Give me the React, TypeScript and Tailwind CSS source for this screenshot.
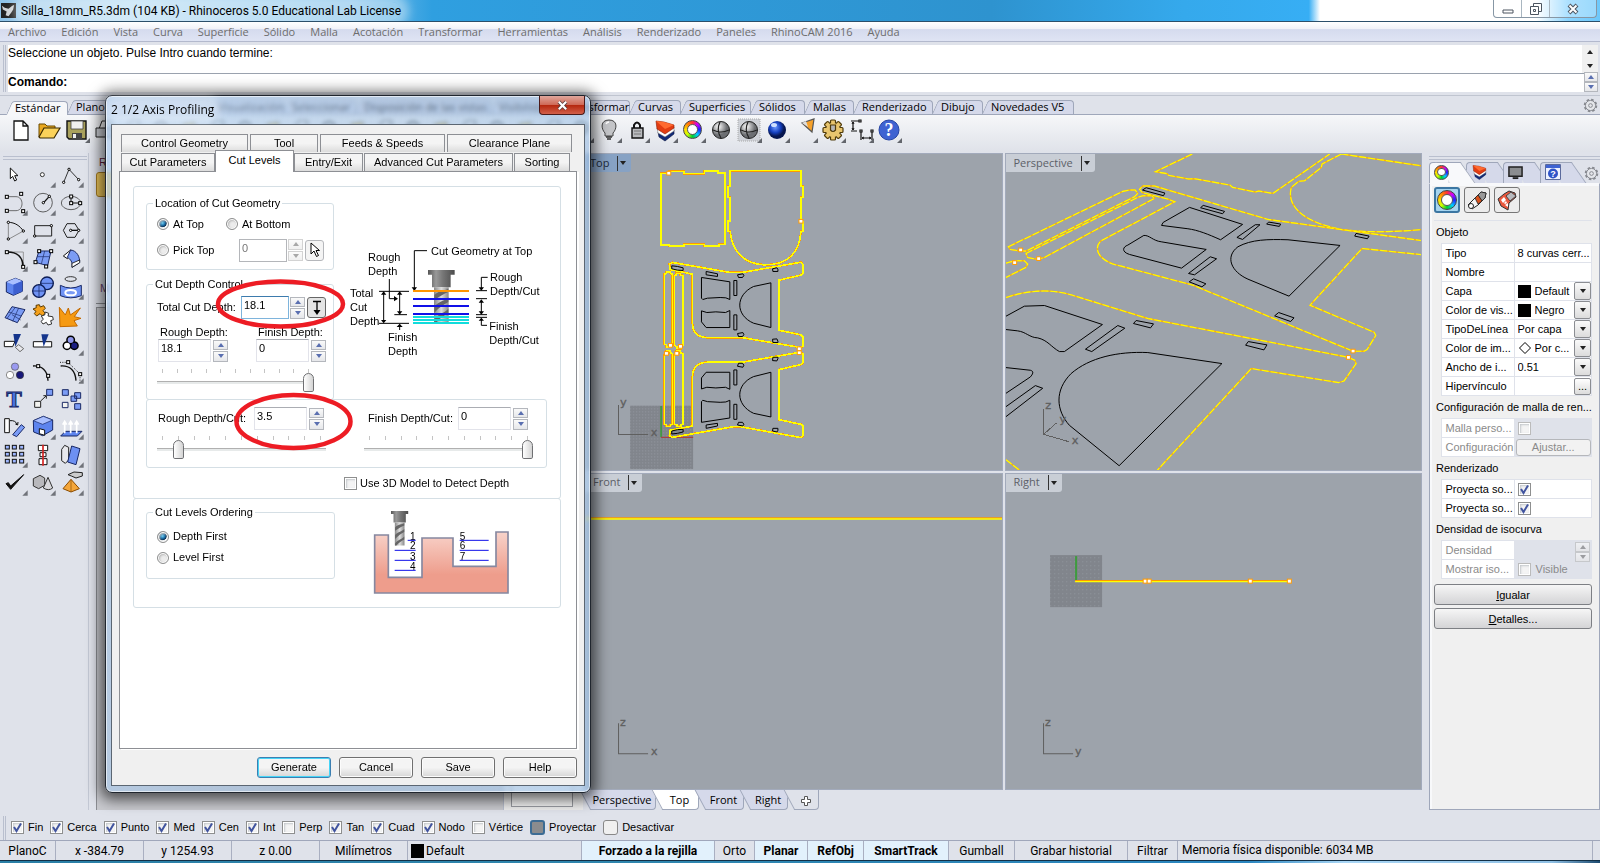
import React from "react";

const SEGOE = "font-['Open_Sans',sans-serif]";

/* ---------- toolbar and palette drawings ---------- */

const Node = ({ x, y }: { x: number; y: number }) => (
  <rect x={x - 4} y={y - 4} width="9" height="9" fill="#fff" stroke="#000" strokeWidth="3" />
);
const Dot = ({ x, y }: { x: number; y: number }) => (
  <circle cx={x} cy={y} r="3.5" fill="#fff" stroke="#000" strokeWidth="3" />
);

type Tool = { name: string; flyout?: boolean; art: React.ReactNode };

const palette: Tool[] = [
  { name: "Seleccionar", art: <path d="M31 204V236L38 229L44 243L50 240L44 227H54Z" fill="#fff" stroke="#111" strokeWidth="3" /> },
  { name: "Punto", flyout: true, art: <circle cx="127" cy="224" r="6" fill="#fff" stroke="#333" strokeWidth="3" /> },
  { name: "Polilínea", flyout: true, art: <><path d="M191 247L207 208L236 239" fill="none" stroke="#111" strokeWidth="2.5" /><Dot x={191} y={247} /><Dot x={207} y={208} /><Dot x={236} y={239} /></> },
  { name: "Curva", flyout: true, art: <><path d="M22 290H48C72 290 72 332 48 332H22" fill="none" stroke="#555" strokeWidth="2.5" /><Node x={20} y={290} /><Node x={63} y={281} /><Node x={20} y={332} /><Node x={69} y={333} /></> },
  { name: "Círculo", flyout: true, art: <><circle cx="129" cy="308" r="28" fill="none" stroke="#444" strokeWidth="2.5" /><path d="M131 308L148 289" stroke="#111" strokeWidth="4" /><Dot x={130} y={308} /><Dot x={148} y={289} /></> },
  { name: "Elipse", flyout: true, art: <><ellipse cx="213" cy="309" rx="29" ry="20" fill="none" stroke="#444" strokeWidth="2.5" /><path d="M213 289V309H240" fill="none" stroke="#111" strokeWidth="3" /><Node x={213} y={289} /><Node x={213} y={309} /><Node x={240} y={309} /></> },
  { name: "Arco", flyout: true, art: <><path d="M25 367V418M25 418L70 393" stroke="#777" strokeWidth="2.5" /><path d="M25 367C45 367 60 378 70 393" fill="none" stroke="#111" strokeWidth="3" /><Dot x={25} y={367} /><Dot x={25} y={417} /><Dot x={70} y={393} /></> },
  { name: "Rectángulo", flyout: true, art: <><path d="M104 377H155V408H104Z" fill="none" stroke="#222" strokeWidth="3" /><Dot x={154} y={377} /><Dot x={104} y={408} /></> },
  { name: "Polígono", flyout: true, art: <><path d="M190 391L201 371H225L237 391L225 412H201Z" fill="none" stroke="#222" strokeWidth="3" /><path d="M212 391H236" stroke="#111" strokeWidth="4" /><Dot x={212} y={391} /><Dot x={236} y={391} /></> },
  { name: "Empalmar curvas", flyout: true, art: <><path d="M22 456H70V500" fill="none" stroke="#888" strokeWidth="2.5" /><path d="M22 456C52 456 69 472 69 500" fill="none" stroke="#111" strokeWidth="5" /><Node x={20} y={456} /><Node x={69} y={500} /></> },
  { name: "Superficie", flyout: true, art: <><path d="M117 453H153L143 497L106 487Z" fill="#7b9cf5" stroke="#1b2a66" strokeWidth="3" /><path d="M134 453L124 492M112 470H148" stroke="#1b2a66" strokeWidth="2" /><Node x={117} y={453} /><Node x={153} y={453} /><Node x={106} y={486} /><Node x={138} y={499} /></> },
  { name: "Superficie por barrido", flyout: true, art: <><path d="M190 468L212 450L224 458L202 476Z" fill="#fff" stroke="#111" strokeWidth="3" /><path d="M212 450C230 452 240 470 239 488L216 502C218 485 212 478 202 472Z" fill="#7b9cf5" stroke="#1b2a66" strokeWidth="3" /><path d="M216 502L239 488V480L216 490Z" fill="#fff" stroke="#111" strokeWidth="2.5" /></> },
  { name: "Caja", flyout: true, art: <><path d="M19 546L46 535L67 543V574L40 586L19 576Z" fill="#5d84ee" stroke="#172765" strokeWidth="3" /><path d="M19 546L46 535L67 543L40 554Z" fill="#a9bfff" /><path d="M40 554L67 543V574L40 586Z" fill="#3c5fd0" /></> },
  { name: "Esfera", flyout: true, art: <><circle cx="141" cy="550" r="19" fill="#6f93f5" stroke="#0d1d55" strokeWidth="4" /><circle cx="117" cy="573" r="19" fill="#6f93f5" stroke="#0d1d55" strokeWidth="4" /><path d="M98 573H136M117 554V592M122 550H160" stroke="#0d1d55" strokeWidth="2" /></> },
  { name: "Cilindro", flyout: true, art: <><ellipse cx="212" cy="537" rx="17" ry="7" fill="none" stroke="#333" strokeWidth="3" /><path d="M181 556Q212 572 244 556V587Q212 600 181 587Z" fill="#6f93f5" stroke="#1b2a66" strokeWidth="3" /><ellipse cx="212" cy="578" rx="16" ry="8" fill="#7b9cf5" stroke="#fff" strokeWidth="6" /></> },
  { name: "Malla", flyout: true, art: <><path d="M15 653L36 620L75 629L52 668Z" fill="#7b9cf5" stroke="#1b2a66" strokeWidth="3" /><path d="M26 636L64 648M38 664L56 624M22 654L46 622M36 644L62 660" stroke="#1b2a66" strokeWidth="2" /></> },
  { name: "Rompecabezas", art: <><path d="M99 627L109 623L108 616L118 614L121 621L131 617L136 625L129 632L136 640L127 648L120 641L110 648L103 641L108 634Z" fill="#f5a11c" stroke="#5a3a00" strokeWidth="3" /><path d="M124 648L134 645L136 636L146 640L144 648L158 650L160 659L152 662L155 672L144 675L139 667L129 672L123 664L130 658Z" fill="#fff" stroke="#333" strokeWidth="3" /></> },
  { name: "Descomponer", art: <path d="M178 622L196 645L205 624L211 645L241 624L223 650L243 655L222 662L232 678L180 680Z" fill="#f59a13" stroke="#c46a00" strokeWidth="3" /> },
  { name: "Recortar", art: <><path d="M13 724H45L38 740H13Z" fill="#fff" stroke="#111" strokeWidth="3" /><path d="M40 702H63L46 740Z" fill="#15358c" /><path d="M46 742L56 734L71 746L60 755Z" fill="#e8e8ec" stroke="#555" strokeWidth="2.5" /></> },
  { name: "Partir", art: <><path d="M100 725H155V741H100Z" fill="#fff" stroke="#111" strokeWidth="3" /><path d="M124 703H146L131 740Z" fill="#15358c" /></> },
  { name: "Agrupar", flyout: true, art: <><g stroke="#000" strokeWidth="9"><circle cx="212" cy="720" r="9" /><circle cx="201" cy="737" r="9" /><circle cx="223" cy="737" r="9" /></g><circle cx="212" cy="720" r="9" fill="#8e96ea" /><circle cx="201" cy="737" r="9" fill="#fff" /><circle cx="223" cy="737" r="9" fill="#1b1f80" /></> },
  { name: "Desagrupar", art: <><circle cx="45" cy="800" r="11" fill="#9a9af0" stroke="#555" strokeWidth="2" /><circle cx="30" cy="825" r="11" fill="#fff" stroke="#555" strokeWidth="2" /><circle cx="60" cy="825" r="11" fill="#17177a" stroke="#333" strokeWidth="2" /></> },
  { name: "Editar puntos", art: <><path d="M99 798C125 796 143 812 144 842" fill="none" stroke="#111" strokeWidth="4" /><Node x={114} y={798} /><Node x={144} y={827} /></> },
  { name: "Puntos de control", flyout: true, art: <><path d="M180 787H204L240 822V850" fill="none" stroke="#222" strokeWidth="3" strokeDasharray="3 4" /><path d="M182 798C210 796 226 812 228 842" fill="none" stroke="#111" strokeWidth="4" /><Node x={204} y={786} /><Node x={240} y={822} /></> },
  { name: "Texto", art: <text x="42" y="920" textAnchor="middle" fontFamily="Liberation Serif" fontSize="70" fontWeight="bold" fill="#4a74e0" stroke="#172765" strokeWidth="3">T</text> },
  { name: "Mover", art: <><path d="M104 904H122V922H104Z" fill="#f2f2ee" stroke="#222" strokeWidth="3" /><path d="M140 868H158V886H140Z" fill="#7b9cf5" stroke="#1b2a66" strokeWidth="3" /><path d="M122 903L138 888M130 887H139V896" fill="none" stroke="#222" strokeWidth="3" /></> },
  { name: "Copiar", art: <g stroke="#1b2a66" strokeWidth="3"><path d="M187 869H205V886H187ZM224 878H242V895H224ZM213 888H230V904H213ZM224 911H242V928H224Z" fill="#7b9cf5" /><path d="M187 907H204V923H187Z" fill="#f2f2ee" /></g> },
  { name: "Rotar", art: <><path d="M14 956H28V998H14Z" fill="#fff" stroke="#111" strokeWidth="3" /><path d="M38 1004L64 974L74 982L50 1010Z" fill="#7b9cf5" stroke="#1b2a66" strokeWidth="3" /><path d="M30 962Q46 960 52 974M46 972L53 975L54 966" fill="none" stroke="#111" strokeWidth="3" /></> },
  { name: "Escalar", flyout: true, art: <><path d="M100 962L130 949L158 960V990L128 1007L101 996Z" fill="#5d84ee" stroke="#172765" strokeWidth="3" /><path d="M100 962L130 949L158 960L128 973Z" fill="#a9bfff" stroke="#172765" strokeWidth="2" /><path d="M118 986L134 990V1006L118 1001Z" fill="#fff" stroke="#111" strokeWidth="3" /></> },
  { name: "Extruir", flyout: true, art: <><path d="M196 994H246L232 1008H182Z" fill="#5d84ee" stroke="#172765" strokeWidth="3" /><path d="M194 1000V966M212 1000V966M230 1000V966M188 974L194 964L200 974M206 974L212 964L218 974M224 974L230 964L236 974" fill="none" stroke="#fff" strokeWidth="5" /></> },
  { name: "Matriz", flyout: true, art: <g fill="#9db6ff" stroke="#111" strokeWidth="3">{[1036, 1057, 1078].map((y) => [16, 37, 59].map((x) => <rect key={x + "-" + y} x={x} y={y} width="12" height="11" />))}</g> },
  { name: "Alinear", flyout: true, art: <><path d="M115 1036H143V1052H115ZM120 1058H138V1070H120ZM117 1076H141V1094H117Z" fill="#fff" stroke="#111" strokeWidth="3" /><path d="M129 1034V1097" stroke="#d42323" strokeWidth="5" /></> },
  { name: "Deformar", flyout: true, art: <><path d="M185 1048L194 1036L206 1042V1080L196 1090L185 1082Z" fill="#e8e8ec" stroke="#222" strokeWidth="3" /><path d="M215 1038L240 1046L228 1094L203 1086Z" fill="#6d90f2" stroke="#172765" strokeWidth="3" /></> },
  { name: "Aceptar", flyout: true, art: <path d="M18 1151L32 1168L71 1124L32 1158L25 1148Z" fill="#111" stroke="#111" strokeWidth="3" /> },
  { name: "Sólidos", flyout: true, art: <><path d="M100 1136L120 1126L134 1134V1156L116 1166L100 1158Z" fill="#b8b8bc" stroke="#333" strokeWidth="3" /><path d="M144 1132L158 1164Q146 1174 130 1164Z" fill="#d8d8dc" stroke="#333" strokeWidth="3" /></> },
  { name: "Pirámide", flyout: true, art: <><path d="M204 1124L222 1116L247 1118V1128L228 1134L214 1128Z" fill="#ccc" stroke="#222" strokeWidth="3" /><path d="M213 1138L238 1166L213 1176L189 1166Z" fill="#f4a63a" stroke="#8a4b00" strokeWidth="3" /><path d="M213 1138V1176" stroke="#8a4b00" strokeWidth="2" /></> },
];

const Palette = () => (
  <aside className="w-[89px] shrink-0 border-r border-[#c3c8d4] pt-[3px]">
    <div className="ml-[3px] mr-px h-[4px] border-y border-[#b9bfce]" />
    <div className="grid w-[84px] grid-cols-3">
      {palette.map((t, i) => (
        <button key={t.name} aria-label={t.name} className="h-[28px] w-[28px]">
          <svg viewBox={`${(i % 3) * 84} ${180 + Math.floor(i / 3) * 84} 84 84`} className="block h-full w-full">
            {t.art}
            {t.flyout && (
              <path d={`M${(i % 3) * 84 + 83} ${180 + Math.floor(i / 3) * 84 + 67}v16h-16Z`} fill="#70737a" />
            )}
          </svg>
        </button>
      ))}
    </div>
  </aside>
);

const Wheel = ({ s }: { s: string }) => (
  <span
    className={`${s} flex items-center justify-center rounded-full border border-[#444] bg-[conic-gradient(#f33,#c0f,#22f,#0cf,#0c3,#cf0,#fd0,#f80,#f33)]`}
  >
    <span className="h-[62%] w-[62%] rounded-full border border-[#555] bg-white" />
  </span>
);

const layers = (
  <>
    <path d="M7 16L14 20L23 14V18L14 25L8 21Z" fill="#122a78" stroke="#0a1640" strokeWidth=".6" />
    <path d="M6 12L14 16L23 11V15L14 21L7 17Z" fill="#fff" stroke="#666" strokeWidth=".5" />
    <path d="M5 5L13 6L23 9V12L14 18L6 13Z" fill="#e23d12" stroke="#8a1800" strokeWidth=".6" />
    <path d="M5 5L13 6L23 9L14 13Z" fill="#ff6a30" />
  </>
);
const sphere = (
  <>
    <circle cx="14" cy="14" r="8.5" fill="url(#grayball)" stroke="#222" />
    <path d="M6 14Q14 18 22 14M13 6Q9 14 14 22" fill="none" stroke="#222" strokeWidth="1.2" />
  </>
);
const printer = (
  <>
    <path d="M8 13L11 5H21L19 13" fill="#fff" stroke="#222" />
    <path d="M5 12H23V21H5Z" fill="#c9ccd2" stroke="#222" />
  </>
);
const cog = (
  <>
    {[0, 45, 90, 135].map((a) => (
      <rect key={a} x="11.500" y="4" width="5" height="20" rx="1" transform={`rotate(${a} 14 14)`} fill="#e8c56e" stroke="#4e3a0a" strokeWidth="1.2" />
    ))}
    <circle cx="14" cy="14" r="7" fill="#e8c56e" />
    <path d="M11.500 9H16.500V14Q14 17 11.500 14Z" fill="#b5b5b5" stroke="#4e3a0a" strokeWidth="1.2" />
  </>
);

const topTools: { name: string; flyout?: boolean; art: React.ReactNode }[] = [
  { name: "Nuevo", art: <path d="M7 5H16L21 10V24H7Z M16 5V10H21" fill="#fff" stroke="#111" strokeWidth="1.3" /> },
  { name: "Abrir", art: <><path d="M4 21V8H10L12 10H20V14" fill="#e9a820" stroke="#6a4b00" /><path d="M4 21L9 12H25L19 22H5Z" fill="#fbd25a" stroke="#3a2a00" strokeWidth="1.2" /></> },
  { name: "Guardar", flyout: true, art: <><path d="M4 5H23V23H6L4 21Z" fill="#a9a15c" stroke="#111" strokeWidth="1.4" /><path d="M8 5H20V13H8Z" fill="#f1f1f1" stroke="#444" strokeWidth=".8" /><path d="M9 17H19V23H9Z" fill="#444" /><path d="M10 18H13V22H10Z" fill="#eee" /></> },
  { name: "Imprimir", flyout: true, art: printer },
  ...["Propiedades", "Cortar", "Copiar", "Pegar", "Deshacer", "Desplazar", "Rotar vista", "Zoom dinámico", "Zoom ventana", "Zoom extensión", "Zoom selección", "Deshacer vista", "Cuatro vistas", "Vehículo", "Plano", "Referencia", "Ocultar"].map(
    (name, i) => ({
      name,
      flyout: true,
      art: i % 3 === 0 ? printer : i % 3 === 1 ? <circle cx="14" cy="12" r="6" fill="#eee" stroke="#444" strokeWidth="2" /> : <path d="M8 8L20 6V18L8 20Z" fill="#f3d27a" stroke="#555" />,
    })
  ),
  { name: "Luz", flyout: true, art: <><path d="M14 4C5 4 6 13 10 17V20H18V17C22 13 23 4 14 4Z" fill="#c4c5c8" stroke="#444" /><path d="M11 21H17M12 23H16" stroke="#333" strokeWidth="1.6" /><path d="M11 8Q12 6 14 6" stroke="#fff" strokeWidth="1.5" fill="none" /></> },
  { name: "Bloquear", flyout: true, art: <><path d="M11 12V9Q14 4 17 9V12" fill="none" stroke="#111" strokeWidth="2" /><path d="M9 12H20V22H9Z" fill="#b9babd" stroke="#111" strokeWidth="1.4" /><path d="M11 15H18M11 18H18" stroke="#777" /></> },
  { name: "Capas", flyout: true, art: layers },
  { name: "Propiedades de objeto", flyout: true, art: "wheel" },
  { name: "Sombrear", art: sphere },
  { name: "Sombrear vista", flyout: true, art: <><path d="M3 3H25V25H3Z" fill="#cfd2d8" stroke="#aaa" strokeDasharray="1 1" />{sphere}</> },
  { name: "Renderizar", flyout: true, art: <><circle cx="14" cy="14" r="9" fill="url(#blueball)" /><ellipse cx="11" cy="9" rx="3" ry="2" fill="#cfe0ff" /></> },
  { name: "Foco", flyout: true, art: <><path d="M11 7L23 3L21 16Z" fill="#f6a12a" stroke="#555" strokeWidth="1.2" /><path d="M11 7L15 5L17 11Z" fill="#ddd" /></> },
  { name: "Opciones", flyout: true, art: cog },
  { name: "Acotar", flyout: true, art: <><path d="M4 5H12M4 15H10M6 6V14M14 16V24M25 16V24M15 22H24" stroke="#111" strokeWidth="1.2" fill="none" /><path d="M5 8L6 6L7 8M5 12L6 14L7 12M17 21L15 22L17 23M22 21L24 22L22 23" fill="none" stroke="#111" /><path d="M12 4H14V6H12ZM13 14H15V16H13ZM24 14H26V16H24Z" fill="#fff" stroke="#111" strokeWidth="1.2" /></> },
  { name: "Ayuda", flyout: true, art: <><circle cx="14" cy="14" r="10" fill="#3f63d2" stroke="#2745a4" /><text x="14" y="20" textAnchor="middle" fontFamily="Liberation Serif" fontSize="18" fontWeight="bold" fill="#fff">?</text></> },
];

const ToolStrip = () => (
  <div className="flex h-[38px] overflow-hidden border-t border-[#9fa7ba] bg-gradient-to-b from-[#f6f7f9] to-[#dfe2e9] pl-[7px]">
    {topTools.map((t) => (
      <button key={t.name} aria-label={t.name} className="flex h-[29px] w-[28px] shrink-0 items-center justify-center">
        <svg viewBox="0 0 28 28" className="block h-[28px] w-[28px]">
          {t.art === "wheel" ? (
            <foreignObject x="4" y="4" width="20" height="20">
              <Wheel s="h-[19px] w-[19px]" />
            </foreignObject>
          ) : (
            t.art
          )}
          {t.flyout && <path d="M27 22V27H22Z" fill="#63666c" />}
        </svg>
      </button>
    ))}
  </div>
);

const Gear = () => (
  <svg viewBox="0 0 16 16" className="block h-[15px] w-[15px]" fill="none" stroke="#85888e">
    <circle cx="8" cy="8" r="6" strokeWidth="2.4" strokeDasharray="2.6 2.1" />
    <circle cx="8" cy="8" r="5.4" fill="#e4e6ea" />
    <circle cx="8" cy="8" r="2" />
  </svg>
);

/* ---------- header ---------- */

const TitleBar = () => (
  <header className="relative flex h-[22px] items-center overflow-hidden border-b border-[#2c4f6a] bg-[linear-gradient(90deg,#8fc3e8_0,#b5dbf3_8%,#7fc0ea_22%,#2f9fe0_27%,#2e93cf_62%,#35a9ec_74%,#37aef4_81.8%,#fff_82.5%,#fff_96%,#8ad4ff_98%,#6cc8fb_100%)]">
    <svg viewBox="0 0 16 16" className="ml-px block h-[15px] w-[15px] bg-[#222]">
      <path d="M1 3L4 5L8 6L12 3L14 2L13 7L11 10L8 14L5 13L6 9L2 7Z" fill="#cfd3d6" />
    </svg>
    <h1 className="ml-[5px] rounded-full bg-white/40 font-[Roboto,sans-serif] text-[12px] leading-[18px] text-black shadow-[0_0_10px_8px_rgba(255,255,255,.4)]">
      Silla_18mm_R5.3dm (104 KB) - Rhinoceros 5.0 Educational Lab License
    </h1>
    <div className="ml-auto mr-[3px] flex h-[18px] self-start rounded-b-[4px] border border-t-0 border-[#8797a5] bg-white/30">
      <button aria-label="Minimizar" className="flex w-[28px] items-center justify-center border-r border-[#a9b6c0]">
        <svg viewBox="0 0 12 12" className="h-[12px] w-[12px]"><path d="M1 7H11V10H1Z" fill="#fff" stroke="#4c5560" /></svg>
      </button>
      <button aria-label="Restaurar" className="flex w-[28px] items-center justify-center border-r border-[#a9b6c0]">
        <svg viewBox="0 0 12 12" className="h-[12px] w-[12px]" fill="#fff" stroke="#4c5560"><path d="M3.500 .5H11.500V8.500H3.500Z" /><path d="M.5 3.500H8.500V11.500H.5Z" /><path d="M3.500 6.500H5.500V8.500H3.500Z" /></svg>
      </button>
      <button aria-label="Cerrar" className="flex w-[46px] items-center justify-center">
        <svg viewBox="0 0 12 12" className="h-[12px] w-[12px]"><path d="M2 2L10 10M10 2L2 10" stroke="#4c5560" strokeWidth="4" /><path d="M2.500 2.500L9.500 9.500M9.500 2.500L2.500 9.500" stroke="#fff" strokeWidth="2" /></svg>
      </button>
    </div>
  </header>
);

const menus = ["Archivo", "Edición", "Vista", "Curva", "Superficie", "Sólido", "Malla", "Acotación", "Transformar", "Herramientas", "Análisis", "Renderizado", "Paneles", "RhinoCAM 2016", "Ayuda"];

const MenuBar = () => (
  <nav className={`${SEGOE} flex h-[20px] items-center gap-[15px] border-b border-[#b3b9cd] bg-[linear-gradient(#fff_0,#f1f2f8_35%,#d5dbee_40%,#dfe4f4_100%)] pl-[8px] pt-px text-[11px] text-[#6d6d6d]`}>
    {menus.map((m) => (
      <button key={m}>{m}</button>
    ))}
  </nav>
);

const Command = () => (
  <section className="flex h-[54px] border-b border-[#c0c5d0] pb-[3px] pl-[3px] pt-[3px]">
    <div className="mr-[2px] w-[3px] border-x border-[#b9bfce]" />
    <div className="min-w-0 flex-1 text-[12px] text-black">
      <div className="flex h-[28px] bg-white">
        <p className="flex-1 leading-[16px]">Seleccione un objeto. Pulse Intro cuando termine:</p>
        <div className="flex w-[16px] flex-col items-center justify-around bg-[#f0f0f0]">
          <Tri up dark />
          <Tri dark />
        </div>
      </div>
      <label className="flex h-[19px] items-center border-t border-[#9aa2ae] bg-white pb-[2px] font-bold">
        Comando:
        <input className="ml-1 min-w-0 flex-1 bg-transparent font-normal outline-none" />
        <span className="flex w-[14px] flex-col">
          <SpinHalf up />
          <SpinHalf />
        </span>
      </label>
    </div>
    <div className="w-[2px]" />
  </section>
);

const Tri = ({ up, dark }: { up?: boolean; dark?: boolean }) => (
  <svg viewBox="0 0 6 4" className="block h-[4px] w-[6px]">
    <path d={up ? "M0 4L3 0L6 4Z" : "M0 0L3 4L6 0Z"} fill={dark ? "#222" : "#5a6fb0"} />
  </svg>
);

const SpinHalf = ({ up, muted }: { up?: boolean; muted?: boolean }) => (
  <button
    type="button"
    aria-label={up ? "Aumentar" : "Disminuir"}
    className={`flex flex-1 items-center justify-center border border-[#b4b7bd] bg-gradient-to-b from-[#fafafa] to-[#e6e7ea] py-[2px] ${muted ? "opacity-60 grayscale" : ""}`}
  >
    <Tri up={up} />
  </button>
);

const Spinner = ({ muted, small }: { muted?: boolean; small?: boolean }) => (
  <span className={`flex w-[15px] shrink-0 flex-col ${small ? "h-[16px]" : "h-[22px] gap-px"}`}>
    <SpinHalf up muted={muted} />
    <SpinHalf muted={muted} />
  </span>
);

/* The third tab's caption lies wholly under the dialog's own title. */
const ribbon: [string, string][] = [
  ["Estándar", "w-[61px]"],
  ["Plano", "w-[56px]"],
  ["", "w-[86px]"],
  ["Visualización", "w-[74px]"],
  ["Seleccionar", "w-[72px]"],
  ["Disposición de las vistas", "w-[135px]"],
  ["Visibilidad", "w-[66px]"],
  ["Transformar", "w-[73px]"],
  ["Curvas", "w-[51px]"],
  ["Superficies", "w-[70px]"],
  ["Sólidos", "w-[54px]"],
  ["Mallas", "w-[49px]"],
  ["Renderizado", "w-[79px]"],
  ["Dibujo", "w-[50px]"],
  ["Novedades V5", "w-[91px]"],
];

const Ribbon = () => (
  <section>
    <div className={`${SEGOE} flex h-[18px] items-end pl-[7px] text-[11px] text-black`}>
      {ribbon.map(([name, w], i) => (
        <button
          key={i}
          aria-label={name || "Configurar vista"}
          className={`${w} relative isolate h-[14px] shrink-0 whitespace-nowrap pl-[8px] text-left leading-[14px] before:absolute before:inset-y-0 before:left-[2px] before:-z-10 before:w-1/2 before:-skew-x-[24deg] before:rounded-tl-[3px] before:border-l before:border-t before:border-[#9fa7ba] after:absolute after:inset-y-0 after:right-0 after:-z-10 after:w-3/4 after:rounded-tr-[4px] after:border-r after:border-t after:border-[#9fa7ba] ${
            i === 0 ? "-mb-px before:bg-[#f6f7f9] after:bg-[#f6f7f9]" : "before:bg-[#d5d9ea] after:bg-[#d5d9ea]"
          }`}
        >
          {name}
        </button>
      ))}
      <span className="ml-auto mr-[2px] self-center"><Gear /></span>
    </div>
    <ToolStrip />
  </section>
);

/* ---------- viewports ---------- */

const ViewTag = ({ name, active }: { name: string; active?: boolean }) => (
  <button
    className={`${SEGOE} relative flex h-[18px] items-center rounded-br-[3px] pr-[5px] text-[11px] ${
      active ? "bg-[#87a2c4] pl-[5px] text-[#1d2a3a]" : "bg-[#c9ced6] pl-[8px] text-[#5c6068]"
    }`}
  >
    {name}
    <span className="ml-[8px] mr-[2px] h-[15px] w-px bg-[#333]" />
    <Tri dark />
  </button>
);

const View = ({ name, active, box, children }: { name: string; active?: boolean; box: string; children: React.ReactNode }) => (
  <section className="relative overflow-hidden border border-[#a2aabb] bg-[#9da3ab]">
    <svg viewBox={box} preserveAspectRatio="xMinYMin slice" className="absolute inset-0 h-full w-full" fill="none">
      {children}
    </svg>
    <ViewTag name={name} active={active} />
  </section>
);

const Sel = ({ d, dashed }: { d: string; dashed?: boolean }) => (
  <g shapeRendering={dashed ? "auto" : "crispEdges"}>
    <path d={d} stroke={dashed ? "#ffb400" : "#ff9a00"} strokeWidth={dashed ? 1.4 : 2} vectorEffect="non-scaling-stroke" />
    <path d={d} stroke="#ffff00" strokeWidth={dashed ? 1.1 : 1.5} strokeDasharray={dashed ? "7 2" : undefined} vectorEffect="non-scaling-stroke" />
  </g>
);
const Ink = ({ d }: { d: string }) => (
  <path d={d} stroke="#000" vectorEffect="non-scaling-stroke" strokeWidth="1" />
);
const Grip = ({ x, y }: { x: number; y: number }) => (
  <rect x={x - 6} y={y - 5} width="12" height="11" fill="#fff" stroke="#ff9a00" strokeWidth="3" />
);
const Axis = ({ d, labels }: { d: string; labels: [string, number, number][] }) => (
  <g>
    <path d={d} stroke="#5f5f5f" vectorEffect="non-scaling-stroke" shapeRendering="crispEdges" />
    {labels.map(([t, x, y]) => (
      <text key={t} x={x} y={y} fill="#5f5f5f" stroke="#5f5f5f" strokeWidth="1" fontFamily="DejaVu Sans" fontSize="34">{t}</text>
    ))}
  </g>
);

/* Cut-outs of one leg panel; the second panel is its mirror image. */
const LegInk = () => (
  <Ink d="M245 377L262 379L279 383V391L262 390L245 386ZM348 394L382 401V409L348 404ZM334 412L419 425V478L407 473L390 472L352 474L338 478L334 474ZM334 512L350 517L377 515L406 517L419 511V562H348L334 545ZM431 421H440V466H431ZM431 524H440V569H431ZM442 404L458 401L461 406L457 412H445ZM547 386L560 383L563 388V394H548ZM442 580L458 577L461 583L457 589H445ZM547 597L560 596L563 603V607H548ZM542 428V562L490 549C435 525 435 465 490 439Z" />
);

const Viewports = () => (
  <main className="flex min-w-0 flex-1 flex-col">
    <div className="grid flex-1 grid-cols-[418fr_417fr] grid-rows-2 gap-[2px]">
      <View name="Top" active box="-15 42 1248 948">
        <defs>
          <pattern id="dots" width="9" height="9" patternUnits="userSpaceOnUse">
            <rect width="9" height="9" fill="#81858c" />
            <rect x="3" y="3" width="3" height="3" fill="#959aa2" />
          </pattern>
        </defs>
        <rect x="120" y="796" width="189" height="190" fill="url(#dots)" />
        <path d="M213 797V890" stroke="#3f9b3f" strokeWidth="5" />
        <path d="M213 891H309" stroke="#a84343" strokeWidth="4" />
        <Axis d="M86 793V883H173" labels={[["y", 90, 798], ["x", 182, 887]]} />
        <Sel d="M213 100H236V94H281V101H343V93H383V99H404V313H387V318H343V313H281V318H238V314H213Z" />
        <Sel d="M419 92H632V139H638V172H632V245H638V274H632C628 340 590 374 526 374C465 374 425 335 420 274H413V243H420V172H413V139H419Z" />
        <Sel d="M238 372L247 367L420 397H455L628 367H634L638 374V400L632 405L566 420V570L632 584L638 590V618L632 622L455 592H350Q307 590 307 548V402L240 388Z" />
        <Sel d="M238 886L247 891L430 859H450L628 891H634L638 886V856L632 852L566 838V688L632 673L638 668V640L630 636L455 666H350Q307 668 307 710V857L240 870Z" />
        <Sel d="M223 402L229 400V395H241V400L247 402V612L241 614V620H229V614L223 612ZM253 406L259 404V400H271V405L278 406V616L272 620V625H260V620L253 616ZM223 642L229 638V633H241V638L247 640V852L241 854V858H229V854L223 852ZM253 642L259 638V633H271V638L278 640V852L272 854V858H260V854L253 852Z" />
        <LegInk />
        <g transform="translate(0 1258) scale(1 -1)"><LegInk /></g>
        {[[236, 99], [632, 243], [241, 615], [271, 618], [229, 639], [260, 639], [627, 625], [627, 637]].map(([x, y]) => <Grip key={x + "," + y} x={x} y={y} />)}
      </View>

      <View name="Perspective" box="15 12 1245 948">
        <Sel dashed d="M573 12L463 65L498 71L502 76L563 87L580 86L686 105L694 112L762 126L772 123L815 130L985 12M1020 12L962 42L960 52L910 92L892 94L870 112C855 165 900 215 1020 238C1090 248 1180 246 1264 238M1020 12L1264 48" />
        <Sel dashed d="M22 290L365 124L385 120H402L410 130L400 140L75 303L52 302L28 298ZM75 310L410 142L425 137H452L460 145L130 322L110 328L80 322Z" />
        <Sel dashed d="M15 339L40 332H70L80 342L74 352L15 382" />
        <Sel dashed d="M1264 272L800 208L480 114L460 108H425L415 118L424 128L500 147L521 155L300 272C285 285 285 305 300 320C315 335 330 342 360 348L575 405L1055 603H1088L1097 598L1123 556L1118 546L926 465L1082 295L1264 314" />
        <Sel dashed d="M15 442C80 420 150 416 210 434L440 505L1040 621L1060 630L1064 640L1028 692L1012 697L750 655L468 960M15 928L56 960" />
        <Ink d="M424 120L435 113L491 129L487 137ZM598 173L606 166L670 184L664 191ZM796 222L802 216L838 222L834 229ZM1060 258L1064 250L1103 258L1098 266ZM565 172L724 223L658 269C620 252 590 240 560 236L481 226L486 217ZM428 256C445 255 455 272 480 275L615 298L541 354L385 313C360 305 365 290 380 285ZM762 224H776L724 268L707 262ZM627 320L646 326L580 374L562 370ZM564 395L577 386L614 401L602 410ZM820 497L832 487L878 503L868 514ZM1016 286L863 438L740 387C690 365 670 320 710 290C750 268 800 267 860 269ZM15 498L70 468L130 466L304 523L190 604H175C150 590 140 570 110 563C85 562 75 545 50 542L15 538M350 526L371 534L272 604L253 597ZM397 520L405 511L457 521L448 533ZM733 585L741 574L797 584L788 599ZM662 640L354 946L205 825C165 780 160 720 210 670C265 622 350 603 440 607ZM15 652L88 660C100 663 95 672 88 680L15 729M15 769L103 706L125 714L15 799" />
        <Grip x={59} y={299} /><Grip x={113} y={325} /><Grip x={41} y={337} /><Grip x={1055} y={602} /><Grip x={1041} y={621} />
        <Axis d="M128 775V852L166 818M128 852L203 874" labels={[["z", 133, 777], ["y", 175, 818], ["x", 212, 880]]} />
      </View>

      <View name="Front" box="585 474 416 316">
        <path d="M584 518H1004" stroke="#ff9a00" strokeWidth="1.500" />
        <path d="M584 519H1004" stroke="#ff0" strokeWidth="1.500" />
        <path d="M618.500 723V753.500H648" stroke="#5f5f5f" />
        <text x="620" y="726" fill="#5f5f5f" stroke="#5f5f5f" strokeWidth=".3" fontFamily="DejaVu Sans" fontSize="11">z</text>
        <text x="651" y="755" fill="#5f5f5f" stroke="#5f5f5f" strokeWidth=".3" fontFamily="DejaVu Sans" fontSize="11">x</text>
      </View>

      <View name="Right" box="1005 474 415 316">
        <defs>
          <pattern id="dots2" width="4" height="4" patternUnits="userSpaceOnUse">
            <rect width="4" height="4" fill="#81858c" />
            <rect x="1" y="1" width="1" height="1" fill="#959aa2" />
          </pattern>
        </defs>
        <rect x="1049" y="555" width="52" height="52" fill="url(#dots2)" />
        <path d="M1075 556V581" stroke="#3f9b3f" strokeWidth="2" />
        <path d="M1074 580.500H1289" stroke="#ff9a00" />
        <path d="M1074 581.500H1289" stroke="#ff0" />
        {[1144, 1148, 1249, 1288].map((x) => <rect key={x} x={x - 2} y="579" width="4" height="4" fill="#fff" stroke="#ff9a00" />)}
        <path d="M1042.500 723V753.500H1072" stroke="#5f5f5f" />
        <text x="1044" y="726" fill="#5f5f5f" stroke="#5f5f5f" strokeWidth=".3" fontFamily="DejaVu Sans" fontSize="11">z</text>
        <text x="1074" y="755" fill="#5f5f5f" stroke="#5f5f5f" strokeWidth=".3" fontFamily="DejaVu Sans" fontSize="11">y</text>
      </View>
    </div>
    <div className={`${SEGOE} flex h-[20px] text-[11px] text-black`}>
      {(["Perspective", "Top", "Front", "Right", "+"] as const).map((t, i) => (
        <button
          key={t}
          aria-label={t === "+" ? "Nueva pestaña" : undefined}
          className={`relative isolate flex h-[20px] items-center justify-center pl-[4px] pt-px before:absolute before:inset-y-0 before:left-[1px] before:-z-10 before:w-1/2 before:skew-x-[28deg] before:border-b before:border-l before:border-[#9fa7ba] after:absolute after:inset-y-0 after:right-0 after:-z-10 after:w-2/3 after:rounded-br-[4px] after:border-b after:border-r after:border-[#9fa7ba] ${
            ["w-[72px]", "w-[43px]", "w-[45px]", "w-[44px]", "w-[31px]"][i]
          } ${i === 1 ? "before:bg-white after:bg-white" : i === 4 ? "before:bg-[#dfe2ea] after:bg-[#dfe2ea]" : "before:bg-[#d5d9ea] after:bg-[#d5d9ea]"}`}
        >
          {t === "+" ? (
            <svg viewBox="0 0 10 10" className="h-[10px] w-[10px]"><path d="M3.500 .5H6.500V3.500H9.500V6.500H6.500V9.500H3.500V6.500H.5V3.500H3.500Z" fill="#fff" stroke="#555" /></svg>
          ) : (
            t
          )}
        </button>
      ))}
    </div>
  </main>
);

/* ---------- properties panel ---------- */

const Head = ({ children }: { children: string }) => (
  <tr className="h-[23px]">
    <th colSpan={3} className="whitespace-nowrap bg-[#f0f0f0] pl-[2px] text-left font-normal">{children}</th>
  </tr>
);

const Row = ({ label, muted, children }: { label: string; muted?: boolean; children?: React.ReactNode }) => (
  <tr className="h-[19px]">
    <td className="bg-[#f0f0f0]" />
    <th scope="row" className={`overflow-hidden whitespace-nowrap border border-[#dfe2ea] bg-white pl-[4px] text-left font-normal ${muted ? "text-[#8a8a8a]" : ""}`}>{label}</th>
    <td className={`border border-[#dfe2ea] p-0 ${muted ? "bg-[#dfe2ea] text-[#8a8a8a]" : "bg-white"}`}>
      <div className="flex h-[17px] items-center whitespace-nowrap pl-[3px]">{children}</div>
    </td>
  </tr>
);

const Drop = ({ name, value, icon }: { name: string; value: string; icon?: React.ReactNode }) => (
  <>
    {icon}
    <select aria-label={name} className="min-w-0 flex-1 appearance-none bg-transparent outline-none">
      <option>{value}</option>
    </select>
    <span className="flex h-[18px] w-[17px] shrink-0 items-center justify-center rounded-[2px] border border-[#8b8d92] bg-gradient-to-b from-[#fafafa] to-[#dcdcdc]">
      <Tri dark />
    </span>
  </>
);

const Swatch = () => <span className="mr-[4px] h-[13px] w-[13px] shrink-0 bg-black" />;

const Check = ({ checked, disabled, label }: { checked?: boolean; disabled?: boolean; label?: string }) => (
  <span className="relative block h-[13px] w-[13px] shrink-0">
    <input
      type="checkbox"
      defaultChecked={checked}
      disabled={disabled}
      aria-label={label}
      className="peer block h-[13px] w-[13px] appearance-none border border-[#8e8f8f] bg-[#f4f4f4] shadow-[inset_0_0_0_1px_#fff,inset_1px_1px_2px_1px_#c4c8cc] disabled:border-[#bbb]"
    />
    <svg viewBox="0 0 13 13" className="pointer-events-none absolute inset-0 hidden h-full w-full peer-checked:block">
      <path d="M3 6L5.500 10L10 2.500" fill="none" stroke="#41549f" strokeWidth="2" />
    </svg>
  </span>
);

const panelTabs: React.ReactNode[] = [
  <Wheel key="w" s="h-[15px] w-[15px]" />,
  <svg key="l" viewBox="3 3 21 24" className="h-[17px] w-[16px]">{layers}</svg>,
  <svg key="m" viewBox="0 0 16 16" className="h-[15px] w-[15px]"><path d="M1 2H15V12H1Z" fill="#8b8d90" stroke="#222" strokeWidth="1.6" /><path d="M5 14H11" stroke="#222" strokeWidth="2" /></svg>,
  <svg key="h" viewBox="0 0 16 16" className="h-[16px] w-[16px]"><path d="M.5 .5H15.500V15.500H.5Z" fill="#eef2ff" stroke="#5b6a9c" /><path d="M1 1H15V4H1Z" fill="#3f63d2" /><circle cx="8" cy="9.500" r="5" fill="#2f53c8" /><text x="8" y="13" textAnchor="middle" fontSize="9" fontWeight="bold" fill="#fff">?</text></svg>,
];

const panelButton = "flex h-[26px] w-[26px] items-center justify-center rounded-[3px]";
const wideButton = "h-[21px] rounded-[3px] border border-[#7d7f84] bg-gradient-to-b from-[#f6f6f6] to-[#d4d4d6] leading-[18px]";

const Properties = () => (
  <aside className="flex w-[171px] shrink-0 flex-col pt-[3px] text-[11px] text-black">
    <div className="h-[4px] border-y border-[#b9bfce]" />
    <div className="mt-[2px] flex h-[21px]">
      {panelTabs.map((t, i) => (
        <button
          key={i}
          aria-label={["Propiedades", "Capas", "Visualización", "Ayuda"][i]}
          className={`relative isolate flex w-[37px] items-center pb-px pl-[5px] before:absolute before:inset-y-0 before:left-0 before:-z-10 before:w-1/2 before:rounded-tl-[4px] before:border-l before:border-t before:border-[#9fa7ba] after:absolute after:inset-y-0 after:right-[-2px] after:-z-10 after:w-2/3 after:skew-x-[35deg] after:border-r after:border-t after:border-[#9fa7ba] ${
            i === 0 ? "z-10 before:bg-[#f8f9fb] after:bg-[#f8f9fb]" : "before:bg-[#d5d9ea] after:bg-[#d5d9ea]"
          }`}
        >
          {t}
        </button>
      ))}
      <span className="relative z-10 ml-auto mr-px mt-[4px]"><Gear /></span>
    </div>
    <div className="flex-1 border border-[#9fa7ba] border-t-[#f8f9fb] bg-[#f0f0f0] px-[4px] pt-[3px] shadow-[inset_2px_2px_0_#f8f9fb]">
      <div className="mb-[7px] flex gap-[4px]">
        <button aria-label="Objeto" className={`${panelButton} border-2 border-[#3b76a2] bg-[#a5d4ef]`}><Wheel s="h-[20px] w-[20px]" /></button>
        <button aria-label="Material" className={`${panelButton} border border-[#777] bg-[#ececec]`}>
          <svg viewBox="0 0 22 22" className="h-[22px] w-[22px]"><path d="M2 16L8 10L15 3L20 4L19 9L12 16L6 20Z" fill="#f4f4f4" stroke="#222" /><path d="M12 6L15 3L20 4L19 9L16 12Z" fill="#999" stroke="#222" strokeWidth=".8" /><path d="M9 9L12 6L16 12L12 15Z" fill="#d9531e" stroke="#222" strokeWidth=".8" /><circle cx="5" cy="17" r="2.500" fill="#fff" stroke="#222" /></svg>
        </button>
        <button aria-label="Mapeado de texturas" className={`${panelButton} border border-[#777] bg-[#ececec]`}>
          <svg viewBox="0 0 22 22" className="h-[22px] w-[22px]"><path d="M2 10L8 5L13 2L19 4L20 8L13 14L12 21L5 17Z" fill="#e9573c" stroke="#333" /><path d="M5 11L8 8L10 11L7 14ZM9 16L12 14V18ZM8 14L10 12L11 14L9 15Z" fill="#fff" /><path d="M10 7L15 3L20 7L14 12Z" fill="#b9bbbf" stroke="#333" strokeWidth=".8" /></svg>
        </button>
      </div>
      <table className="w-[158px] table-fixed border-collapse border-t border-[#dfe2ea] leading-[15px]">
        <colgroup><col className="w-[7px]" /><col className="w-[73px]" /><col /></colgroup>
        <tbody>
          <Head>Objeto</Head>
          <Row label="Tipo">8 curvas cerr...</Row>
          <Row label="Nombre"><input aria-label="Nombre" className="w-full bg-transparent outline-none" /></Row>
          <Row label="Capa"><Drop name="Capa" value="Default" icon={<Swatch />} /></Row>
          <Row label="Color de vis..."><Drop name="Color de visualización" value="Negro" icon={<Swatch />} /></Row>
          <Row label="TipoDeLínea"><Drop name="Tipo de línea" value="Por capa" /></Row>
          <Row label="Color de im...">
            <Drop name="Color de impresión" value="Por c..." icon={<svg viewBox="0 0 12 12" className="ml-px mr-[4px] h-[12px] w-[12px] shrink-0"><path d="M6 .5L11.500 6L6 11.500L.5 6Z" fill="#fff" stroke="#000" /></svg>} />
          </Row>
          <Row label="Ancho de i..."><Drop name="Ancho de impresión" value="0.51" /></Row>
          <Row label="Hipervínculo">
            <button aria-label="Examinar" className="ml-auto h-[17px] w-[17px] rounded-[2px] border border-[#8b8d92] bg-gradient-to-b from-white to-[#dcdcdc] leading-[11px]">...</button>
          </Row>
          <Head>Configuración de malla de ren...</Head>
          <Row label="Malla perso..." muted><Check disabled label="Malla personalizada" /></Row>
          <Row label="Configuración" muted>
            <button disabled className="-ml-[2px] h-[17px] flex-1 rounded-[3px] border border-[#b5b7bb] bg-[#f2f2f2] leading-[14px]">Ajustar...</button>
          </Row>
          <Head>Renderizado</Head>
          <Row label="Proyecta so..."><Check checked label="Proyecta sombras" /></Row>
          <Row label="Proyecta so..."><Check checked label="Proyecta sombras en otros" /></Row>
          <Head>Densidad de isocurva</Head>
          <Row label="Densidad" muted><span className="ml-auto mr-px"><Spinner muted small /></span></Row>
          <Row label="Mostrar iso..." muted>
            <label className="flex items-center gap-[5px]"><Check disabled /> Visible</label>
          </Row>
        </tbody>
      </table>
      <div className="mt-[5px] flex w-[158px] flex-col gap-[3px]">
        <button className={wideButton}><u>I</u>gualar</button>
        <button className={wideButton}><u>D</u>etalles...</button>
      </div>
    </div>
  </aside>
);

/* ---------- footer ---------- */

const snaps: [string, boolean][] = [["Fin", true], ["Cerca", true], ["Punto", true], ["Med", true], ["Cen", true], ["Int", true], ["Perp", false], ["Tan", true], ["Cuad", true], ["Nodo", true], ["Vértice", false]];

const status: [string, string, string?][] = [
  ["PlanoC", "w-[56px]"],
  ["x -384.79", "w-[88px]"],
  ["y 1254.93", "w-[88px]"],
  ["z 0.00", "w-[88px]"],
  ["Milímetros", "w-[88px]"],
  ["Default", "w-[174px]", "swatch"],
  ["Forzado a la rejilla", "w-[133px]", "on"],
  ["Orto", "w-[40px]"],
  ["Planar", "w-[53px]", "on"],
  ["RefObj", "w-[56px]", "on"],
  ["SmartTrack", "w-[85px]", "on"],
  ["Gumball", "w-[66px]"],
  ["Grabar historial", "w-[113px]"],
  ["Filtrar", "w-[50px]"],
];

const Footer = () => (
  <footer className="text-[12px] text-black">
    <div className="flex h-[30px] items-center pl-[3px] pt-[5px] text-[11px]">
      <span className="mr-[5px] h-[24px] w-[3px] border-x border-[#b9bfce]" />
      <div className="flex items-center gap-[7px]">
        {snaps.map(([s, on]) => (
          <label key={s} className="flex items-center gap-[4px]"><Check checked={on} />{s}</label>
        ))}
        <button className="flex items-center gap-[4px]"><span className="h-[15px] w-[15px] rounded-[3px] border-2 border-[#3c6c94] bg-[#8a8c8e]" />Proyectar</button>
        <button className="flex items-center gap-[4px]"><span className="h-[15px] w-[15px] rounded-[3px] border border-[#888] bg-[#f0f0f0]" />Desactivar</button>
      </div>
    </div>
    <div className="flex h-[20px] border-t border-[#a0a7bb] font-[Roboto,sans-serif] text-[12px] leading-[18px]">
      {status.map(([t, w, kind]) => (
        <button
          key={t}
          className={`${w} flex shrink-0 items-center whitespace-nowrap border-r border-[#a9afc1] ${kind === "swatch" ? "gap-[2px] pl-[3px]" : "justify-center"} ${kind === "on" ? "bg-[#e2f1fc] font-bold" : ""}`}
        >
          {kind === "swatch" && <span className="h-[14px] w-[13px] bg-black" />}
          {t}
        </button>
      ))}
      <span className="flex-1 whitespace-nowrap pl-[4px]">Memoria física disponible: 6034 MB</span>
      <span className="w-[8px] border-l border-[#a9afc1]" />
    </div>
    <div className="flex h-[3px] border-t border-[#123047] bg-[linear-gradient(90deg,#2a7fa6,#2f86ae_40%,#2a86c0_78%,#a9d6f5_84%,#8fc0e4_97%,#1c4a70)]" />
  </footer>
);

/* ---------- machining panel behind the dialog ---------- */

const CamPanel = () => (
  <div className="flex w-[493px] shrink-0">
    <div className="flex flex-1 flex-col bg-[#dfe2ea] pl-[6px]">
      <div className="h-[19px] pl-[3px] text-[11px] leading-[19px] text-[#5c2038]">R</div>
      <div className="h-[25px] w-[40px] rounded-[3px] border border-[#a57b22] bg-[#f0c95c]" />
      <div className="h-[107px] border-b border-[#8b8d92] pl-[4px] pt-[84px] text-[11px] leading-[14px] text-[#6a4470]">M</div>
      <div className="mt-[3px] flex-1 border-l border-t border-[#8b8d92] bg-[#c9cacf]" />
    </div>
    <div className="w-[80px] border-l border-[#b9bfce] bg-[#ececec] pb-[3px] pl-[7px] pr-[10px]">
      <div className="h-full border border-[#9a9ca2] bg-[#f4f4f4]" />
    </div>
  </div>
);

/* ---------- dialog ---------- */

const DlgTab = ({ w, children, on }: { w: string; children: string; on?: boolean }) => (
  <button
    role="tab"
    aria-selected={!!on}
    className={`${w} shrink-0 whitespace-nowrap border border-b-0 border-[#8d8f94] ${
      on ? "relative z-10 -mb-px h-[22px] bg-white pb-[3px]" : "h-[18px] bg-gradient-to-b from-[#f4f4f4] from-50% to-[#dcdcdc]"
    }`}
  >
    {children}
  </button>
);

const Field = ({ id, label, value, w, disabled, focus }: { id: string; label?: string; value: string; w: string; disabled?: boolean; focus?: boolean }) => (
  <input
    id={id}
    aria-label={label}
    defaultValue={value}
    disabled={disabled}
    className={`${w} block h-[23px] shrink-0 border bg-white pb-[5px] pl-[2px] outline-none disabled:text-[#777] ${
      disabled ? "border-[#b4b6ba]" : focus ? "border-[#7eb4dc] border-t-[#3d7bad]" : "border-[#e2e3ea] border-t-[#abadb3]"
    }`}
  />
);

const Radio = ({ name, label, on }: { name: string; label: string; on?: boolean }) => (
  <label className="flex items-center gap-[4px]">
    <input
      type="radio"
      name={name}
      defaultChecked={on}
      className="h-[12px] w-[12px] appearance-none rounded-full border border-[#8e8f8f] bg-[#ececec] shadow-[inset_0_0_0_1px_#fff,inset_1px_1px_2px_1px_#bbb] checked:bg-[radial-gradient(circle_at_45%_40%,#6fd0f5_0,#1b6fa8_30%,#0c2f52_48%,#f0f4f6_56%)]"
    />
    {label}
  </label>
);

const Slide = ({ label, value, w }: { label: string; value: number; w: string }) => (
  <div className={`${w} pt-[6px]`}>
    <div className="flex justify-between px-[5px]">
      {Array.from({ length: 11 }, (_, i) => (
        <span key={i} className="h-[4px] w-px bg-[#c4c4c4]" />
      ))}
    </div>
    <input
      type="range"
      aria-label={label}
      min={0}
      max={100}
      defaultValue={value}
      className="block h-[19px] w-full appearance-none bg-transparent [&::-webkit-slider-runnable-track]:h-[3px] [&::-webkit-slider-runnable-track]:border-t [&::-webkit-slider-runnable-track]:border-[#b0b0b0] [&::-webkit-slider-runnable-track]:bg-[#e7eaea] [&::-webkit-slider-thumb]:mt-[-9px] [&::-webkit-slider-thumb]:h-[19px] [&::-webkit-slider-thumb]:w-[11px] [&::-webkit-slider-thumb]:appearance-none [&::-webkit-slider-thumb]:rounded-b-[2px] [&::-webkit-slider-thumb]:rounded-t-[6px] [&::-webkit-slider-thumb]:border [&::-webkit-slider-thumb]:border-[#6f7073] [&::-webkit-slider-thumb]:bg-[linear-gradient(90deg,#fff,#d4d4d4)]"
    />
  </div>
);

const Cutter = () => (
  <svg x="983" y="540" width="82" height="160" viewBox="0 0 82 160">
    <defs>
      <linearGradient id="steel"><stop offset="0" stopColor="#555" /><stop offset=".3" stopColor="#999" /><stop offset=".55" stopColor="#777" /><stop offset="1" stopColor="#4c4c4c" /></linearGradient>
      <linearGradient id="bit"><stop offset="0" stopColor="#888" /><stop offset=".5" stopColor="#ddd" /><stop offset="1" stopColor="#888" /></linearGradient>
    </defs>
    <path d="M1 0H81V14H69V52H13V14H1Z" fill="url(#steel)" />
    <path d="M19 52H63V158H19Z" fill="url(#bit)" />
    <path d="M20 75C35 60 50 62 62 56V66C48 72 35 80 20 90ZM20 110C35 92 50 95 62 82V96C48 104 35 112 20 128ZM20 148C35 128 50 130 62 116V130C48 138 35 145 26 158H20Z" fill="#666" />
  </svg>
);

const DepthDiagram = () => (
  <svg viewBox="735 450 600 360" className="ml-[11px] mt-[44px] h-[120px] w-[200px] shrink-0" fontFamily="Liberation Sans" fontSize="33" fill="#000">
    {([["Rough", 804, 513], ["Depth", 804, 555], ["Cut Geometry at Top", 993, 495], ["Rough", 1170, 573], ["Depth/Cut", 1170, 615], ["Total", 750, 621], ["Cut", 750, 663], ["Depth", 750, 705], ["Finish", 864, 753], ["Depth", 864, 795], ["Finish", 1168, 720], ["Depth/Cut", 1168, 762]] as [string, number, number][]).map(([t, x, y]) => (
      <text key={x + "," + y} x={x} y={y}>{t}</text>
    ))}
    <Cutter />
    <g fill="none" stroke="#000" strokeWidth="3">
      <path d="M981 482H943V595M868 567V626H890M837 604H927M837 700H927M851 608V696M899 608V670M883 674H921M899 704V720M1163 562H1144V595M1128 602H1161M1128 626H1161M1144 632V668M1128 674H1161M1128 682H1161M1144 686V706H1161" />
    </g>
    <path d="M935 592H951L943 603ZM882 618V634L894 626ZM843 614H859L851 604ZM843 690H859L851 700ZM891 614H907L899 604ZM891 664H907L899 674ZM890 711H908L899 701ZM1136 592H1152L1144 602ZM1136 638H1152L1144 628ZM1136 664H1152L1144 674ZM1136 692H1152L1144 683Z" />
    <g strokeWidth="6">
      <path d="M939 603H1107" stroke="#ff9500" />
      <path d="M939 627H1107M939 648H1107M939 672H1107" stroke="#1010e8" />
      <path d="M939 681H1107M939 690H1107M939 699H1107" stroke="#12dcdc" />
    </g>
  </svg>
);

const OrderDiagram = () => (
  <svg viewBox="820 390 411 255" className="ml-[38px] mt-[11px] h-[85px] w-[137px] shrink-0" fontFamily="Liberation Sans" fontSize="30">
    <defs><linearGradient id="stock" x2="0" y2="1"><stop offset="0" stopColor="#f8d3ca" /><stop offset=".7" stopColor="#ee9d8c" /></linearGradient></defs>
    <path d="M825 465H866V592H967V474H1060V559H1189V456H1225V639H825Z" fill="url(#stock)" stroke="#8688a0" strokeWidth="5" />
    <svg x="873" y="393" width="54" height="105" viewBox="983 540 82 160" preserveAspectRatio="none"><Cutter /></svg>
    {([["1", 931, 479], ["2", 931, 508], ["3", 931, 539], ["4", 931, 569], ["5", 1080, 479], ["6", 1080, 508], ["7", 1080, 540]] as [string, number, number][]).map(([t, x, y]) => <text key={t} x={x} y={y}>{t}</text>)}
    <path d="M924 481H948M885 511H948M885 541H948M885 571H948M1080 481H1167M1080 511H1167M1080 541H1167" stroke="#1010e8" strokeWidth="3" />
  </svg>
);

const legend = "ml-[6px] px-[2px] leading-[14px]";
const line = "border border-[#d5dfe5] rounded-[3px]";

const Dialog = () => (
  <div
    role="dialog"
    aria-labelledby="dlg-title"
    className="absolute left-[105px] top-[95px] w-[486px] rounded-[7px] border border-[#20262e] bg-[linear-gradient(100deg,rgba(178,208,240,.7),rgba(150,185,222,.5)_50%,rgba(165,198,232,.7))] px-[5px] pb-[6px] text-[11px] text-black shadow-[0_2px_14px_5px_rgba(0,0,0,.6),inset_0_0_0_1px_rgba(255,255,255,.6)] backdrop-blur-[2px]"
  >
    <div className="flex h-[28px] items-start justify-between">
      <h2 id="dlg-title" className={`${SEGOE} mt-[5px] rounded-full bg-white/30 text-[12px] leading-[17px] shadow-[0_0_8px_6px_rgba(255,255,255,.3)]`}>2 1/2 Axis Profiling</h2>
      <button aria-label="Cerrar" className="flex h-[19px] w-[46px] items-center justify-center rounded-b-[4px] border border-t-0 border-[#4b1a18] bg-[linear-gradient(#e0a79c,#cf6a58_48%,#b5280f_52%,#d2604a)]">
        <svg viewBox="0 0 12 12" className="h-[11px] w-[11px]"><path d="M2 2L10 10M10 2L2 10" stroke="#5a3a3a" strokeWidth="4" /><path d="M2 2L10 10M10 2L2 10" stroke="#fff" strokeWidth="2.400" /></svg>
      </button>
    </div>
    <div className="border border-[#5b6672] bg-[#f0f0f0] pb-[7px] pl-[7px] pr-[7px] pt-[9px] text-[11px]">
      <div role="tablist" className="pl-[2px]">
        <div className="flex h-[19px] gap-[2px]">
          <DlgTab w="w-[127px]">Control Geometry</DlgTab>
          <DlgTab w="w-[68px]">Tool</DlgTab>
          <DlgTab w="w-[125px]">Feeds &amp; Speeds</DlgTab>
          <DlgTab w="w-[125px]">Clearance Plane</DlgTab>
        </div>
        <div className="flex h-[18px] items-end">
          <DlgTab w="w-[94px]">Cut Parameters</DlgTab>
          <DlgTab w="w-[79px]" on>Cut Levels</DlgTab>
          <DlgTab w="w-[69px]">Entry/Exit</DlgTab>
          <span className="w-px" />
          <DlgTab w="w-[149px]">Advanced Cut Parameters</DlgTab>
          <span className="w-px" />
          <DlgTab w="w-[56px]">Sorting</DlgTab>
        </div>
      </div>
      <div role="tabpanel" className="relative min-h-[578px] border border-[#8d8f94] bg-white pl-[13px] pr-[15px] pt-[14px] shadow-[2px_1px_0_#fff]">
        <div className={`${line} h-[313px] pl-[12px] pt-[9px]`}>
          <div className="flex items-start">
            <div className="flex w-[188px] shrink-0 flex-col gap-[7px]">
              <fieldset className={`${line} h-[74px] min-w-0`}>
                <legend className={legend}>Location of Cut Geometry</legend>
                <div className="flex h-[28px] items-center pl-[10px]">
                  <div className="w-[69px]"><Radio name="loc" label="At Top" on /></div>
                  <Radio name="loc" label="At Bottom" />
                </div>
                <div className="flex h-[24px] items-center pl-[10px]">
                  <div className="w-[82px]"><Radio name="loc" label="Pick Top" /></div>
                  <Field id="pick" label="Pick Top" value="0" w="w-[48px]" disabled />
                  <span className="ml-px"><Spinner muted /></span>
                  <button aria-label="Pick" className="ml-[2px] flex h-[21px] w-[19px] items-center justify-center rounded-[3px] border border-[#b5b7bb] bg-[#f4f4f4]">
                    <svg viewBox="0 0 12 16" className="h-[16px] w-[12px]"><path d="M2 1V12L5 9L7.500 14.500L9.500 13.500L7 8.500H10.500Z" fill="#fff" stroke="#000" /></svg>
                  </button>
                </div>
              </fieldset>
              <fieldset className={`${line} h-[123px] min-w-0`}>
                <legend className={legend}>Cut Depth Control</legend>
                <div className="flex items-center pl-[10px] pt-[5px]">
                  <label htmlFor="total" className="w-[84px]">Total Cut Depth:</label>
                  <Field id="total" value="18.1" w="w-[48px]" focus />
                  <span className="ml-px"><Spinner /></span>
                  <button aria-label="Pick depth" className="ml-[2px] flex h-[21px] w-[19px] items-center justify-center rounded-[3px] border border-[#666] bg-[#e4e4e4]">
                    <svg viewBox="0 0 12 16" className="h-[16px] w-[12px]"><path d="M2 1.500H10M6 2V11" stroke="#000" strokeWidth="1.300" /><path d="M2.500 10H9.500L6 15Z" /></svg>
                  </button>
                </div>
                <div className="flex pl-[11px] pt-[6px]">
                  {[["rough", "Rough Depth:", "18.1"], ["finish", "Finish Depth:", "0"]].map(([id, label, v]) => (
                    <div key={id} className="w-[98px] shrink-0">
                      <label htmlFor={id} className="block whitespace-nowrap pl-[2px] leading-[14px]">{label}</label>
                      <div className="flex items-center gap-[2px]">
                        <Field id={id} value={v} w="w-[53px]" />
                        <Spinner />
                      </div>
                    </div>
                  ))}
                </div>
                <div className="pl-[10px] pt-px"><Slide label="Rough / finish split" value={100} w="w-[157px]" /></div>
              </fieldset>
            </div>
            <DepthDiagram />
          </div>
          <div className={`${line} -mt-px flex h-[69px] w-[401px] pt-[7px]`}>
            {[["rdc", "Rough Depth/Cut:", "3.5", "w-[96px]", "w-[207px]"], ["fdc", "Finish Depth/Cut:", "0", "w-[93px] pl-[3px]", "w-[190px]"]].map(([id, label, v, lw, cw]) => (
              <div key={id} className={`${cw} shrink-0 pl-[10px]`}>
                <div className="flex items-center pl-px">
                  <label htmlFor={id} className={`${lw} whitespace-nowrap`}>{label}</label>
                  <Field id={id} value={v} w="w-[53px]" />
                  <span className="ml-[2px]"><Spinner /></span>
                </div>
                <Slide label={label} value={v === "0" ? 100 : 10} w="w-[169px]" />
              </div>
            ))}
          </div>
          <label className="ml-[198px] mt-[7px] flex items-center gap-[3px]"><Check />Use 3D Model to Detect Depth</label>
        </div>
        <div className={`${line} -mt-px flex h-[110px] items-start pl-[12px]`}>
          <fieldset className={`${line} mt-[6px] h-[74px] w-[189px]`}>
            <legend className={legend}>Cut Levels Ordering</legend>
            <div className="flex flex-col gap-[4px] pl-[10px] pt-[9px] leading-[17px]">
              <Radio name="order" label="Depth First" on />
              <Radio name="order" label="Level First" />
            </div>
          </fieldset>
          <OrderDiagram />
        </div>
        <svg viewBox="120 172 455 576" className="pointer-events-none absolute inset-0 h-full w-full" fill="none" stroke="#ed1c24" strokeWidth="4.500">
          <ellipse cx="280" cy="304" rx="62.500" ry="22.500" />
          <ellipse cx="293" cy="421.500" rx="57" ry="26.500" />
        </svg>
      </div>
      <div className="mt-[8px] flex justify-end gap-[8px]">
        {["Generate", "Cancel", "Save", "Help"].map((b, i) => (
          <button
            key={b}
            className={`h-[21px] w-[74px] rounded-[3px] border bg-gradient-to-b from-[#f4f4f4] from-50% to-[#d6d6d6] ${i === 0 ? "border-[#3c7fb1] shadow-[inset_0_0_0_1px_#46d4f7]" : "border-[#707070] shadow-[inset_0_0_0_1px_#fcfcfc]"}`}
          >
            {b}
          </button>
        ))}
      </div>
    </div>
  </div>
);

export default function App() {
  return (
    <div className="relative flex min-h-screen flex-col overflow-hidden bg-[#dfe2ea] font-['Liberation_Sans',sans-serif] leading-normal">
      <svg className="absolute h-0 w-0">
        <defs>
          <radialGradient id="grayball" cx=".35" cy=".3"><stop offset="0" stopColor="#fff" /><stop offset="1" stopColor="#6c6e72" /></radialGradient>
          <radialGradient id="blueball" cx=".4" cy=".35"><stop offset="0" stopColor="#6f9bff" /><stop offset=".6" stopColor="#1540c0" /><stop offset="1" stopColor="#06164f" /></radialGradient>
        </defs>
      </svg>
      <TitleBar />
      <MenuBar />
      <Command />
      <Ribbon />
      <div className="flex min-h-0 flex-1 gap-[1px] pt-[1px]">
        <Palette />
        <CamPanel />
        <Viewports />
        <div className="w-[5px]" />
        <Properties />
      </div>
      <Footer />
      <Dialog />
    </div>
  );
}
